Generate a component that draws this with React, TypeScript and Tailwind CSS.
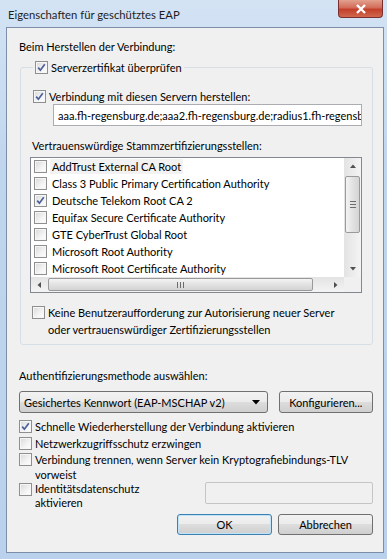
import React from "react";

const Check = ({ checked = false }: { checked?: boolean }) => (
  <span className="w-[13px] h-[13px] shrink-0 border border-[#8e8f8f] bg-[linear-gradient(135deg,#d8d8d8,#f4f4f4_60%,#ffffff)] shadow-[inset_0_0_0_1px_#f6f6f6] flex items-center justify-center">
    {checked && (
      <svg width="9" height="9" viewBox="0 0 9 9">
        <path d="M1.2 4.6 L3.4 7.2 L7.8 1.2" stroke="#4b5f9c" strokeWidth="1.7" fill="none" />
      </svg>
    )}
  </span>
);

const certs = [
  { name: "AddTrust External CA Root", checked: false, focus: true },
  { name: "Class 3 Public Primary Certification Authority", checked: false },
  { name: "Deutsche Telekom Root CA 2", checked: true },
  { name: "Equifax Secure Certificate Authority", checked: false },
  { name: "GTE CyberTrust Global Root", checked: false },
  { name: "Microsoft Root Authority", checked: false },
  { name: "Microsoft Root Certificate Authority", checked: false },
];

const Arrow = ({ dir }: { dir: "up" | "down" | "left" | "right" }) => {
  const d = {
    up: "M1 5 L4 1.5 L7 5 Z",
    down: "M1 2 L4 5.5 L7 2 Z",
    left: "M5 1 L1.5 4 L5 7 Z",
    right: "M2 1 L5.5 4 L2 7 Z",
  }[dir];
  return (
    <svg width="8" height="8" viewBox="0 0 8 8">
      <path d={d} fill="#505050" />
    </svg>
  );
};

const btn =
  "h-[21px] border rounded-[3px] bg-[linear-gradient(180deg,#f2f2f2,#ebebeb_50%,#dddddd_50%,#cfcfcf)] flex items-center";

const App = () => {
  return (
    <div className="w-[387px] h-[559px] bg-[linear-gradient(180deg,#d3e3f4,#c0d6ee_30%,#b9d1ec)] flex flex-col font-['Lato',sans-serif] text-[11px] leading-[15px] text-black overflow-hidden">
      {/* title bar */}
      <div className="h-[27px] flex items-start justify-between">
        <div className="pl-[8px] pt-[7px] text-[11.3px] text-[#1e1e1e]">Eigenschaften für geschütztes EAP</div>
        <div className="mr-[4px] w-[45px] h-[18px] rounded-b-[4px] border border-[#7b2f2f] border-t-0 bg-[linear-gradient(180deg,#e2a18e,#d36c5a_45%,#c33f2a_55%,#d0684e)] flex items-center justify-center">
          <svg width="12" height="10" viewBox="0 0 12 10">
            <path d="M2 1 L10 9 M10 1 L2 9" stroke="#ffffff" strokeWidth="2.4" />
          </svg>
        </div>
      </div>

      {/* client */}
      <div className="ml-[6px] mr-[3px] mb-[6px] flex-1 min-w-0 border border-[#7d8fa6] bg-[#f0f0f0] pl-[12px] pr-[10px] pt-[11px] flex flex-col">
        <div>Beim Herstellen der Verbindung:</div>

        <fieldset className="mt-[6px] ml-[1px] min-w-0 border border-[#d5dfe5] rounded-[3px] pl-[10px] pr-[10px] pb-[6px]">
          <legend className="ml-[2px] px-[2px] flex items-center gap-[3px]">
            <Check checked />
            <span>Serverzertifikat überprüfen</span>
          </legend>

          <div className="mt-[14px] flex items-center gap-[3px] pl-[2px]">
            <Check checked />
            <span>Verbindung mit diesen Servern herstellen:</span>
          </div>
          <div className="ml-[22px] h-[22px] border border-[#abadb3] bg-white px-[4px] flex items-center whitespace-nowrap overflow-hidden">
            aaa.fh-regensburg.de;aaa2.fh-regensburg.de;radius1.fh-regensburg.de
          </div>

          <div className="mt-[12px] pl-[1px]">Vertrauenswürdige Stammzertifizierungsstellen:</div>
          <div className="mt-[4px] -ml-[1px] h-[136px] border border-[#828790] bg-white flex flex-col overflow-hidden">
            <div className="flex flex-1 min-h-0">
              <div className="flex-1 min-w-0 overflow-hidden">
                {certs.map((c) => (
                  <div key={c.name} className="h-[17px] flex items-center pl-[3px] whitespace-nowrap">
                    <Check checked={c.checked} />
                    <span className={"ml-[3px] px-[2px] " + (c.focus ? "bg-[#f2f2f2]" : "")}>{c.name}</span>
                  </div>
                ))}
              </div>
              {/* vertical scrollbar */}
              <div className="w-[17px] shrink-0 bg-[linear-gradient(90deg,#e3e3e3,#f4f4f4)] flex flex-col items-center">
                <div className="h-[17px] flex items-center justify-center"><Arrow dir="up" /></div>
                <div className="mt-[1px] w-[15px] h-[57px] rounded-[2px] border border-[#9a9a9a] bg-[linear-gradient(90deg,#f4f4f4,#e2e2e2_50%,#d4d4d4)] flex flex-col items-center justify-center gap-[2px]">
                  <span className="w-[6px] h-[1px] bg-[#6c6c6c]" />
                  <span className="w-[6px] h-[1px] bg-[#6c6c6c]" />
                  <span className="w-[6px] h-[1px] bg-[#6c6c6c]" />
                </div>
                <div className="flex-1" />
                <div className="h-[17px] flex items-center justify-center"><Arrow dir="down" /></div>
              </div>
            </div>
            {/* horizontal scrollbar */}
            <div className="h-[15px] shrink-0 flex bg-[linear-gradient(180deg,#e3e3e3,#f4f4f4)]">
              <div className="w-[17px] flex items-center justify-center"><Arrow dir="left" /></div>
              <div className="flex-1 flex items-center pr-[14px]">
                <div className="w-full h-[13px] rounded-[2px] border border-[#9a9a9a] bg-[linear-gradient(180deg,#f4f4f4,#e2e2e2_50%,#d4d4d4)] flex items-center justify-center gap-[2px]">
                  <span className="w-[1px] h-[6px] bg-[#6c6c6c]" />
                  <span className="w-[1px] h-[6px] bg-[#6c6c6c]" />
                  <span className="w-[1px] h-[6px] bg-[#6c6c6c]" />
                </div>
              </div>
              <div className="w-[17px] flex items-center justify-center"><Arrow dir="right" /></div>
              <div className="w-[17px] bg-[#f0f0f0]" />
            </div>
          </div>

          <div className="mt-[11px] flex items-start gap-[3px] pl-[1px]">
            <span className="mt-[2px]"><Check /></span>
            <span className="leading-[17px]">
              Keine Benutzeraufforderung zur Autorisierung neuer Server
              <br />
              oder vertrauenswürdiger Zertifizierungsstellen
            </span>
          </div>
        </fieldset>

        <div className="mt-[23px]">Authentifizierungsmethode auswählen:</div>
        <div className="mt-[8px] flex items-center gap-[11px]">
          <div className={btn + " w-[250px] h-[22px] border-[#707070] justify-between pl-[4px] pr-[7px]"}>
            <span>Gesichertes Kennwort (EAP-MSCHAP v2)</span>
            <svg width="8" height="5" viewBox="0 0 8 5"><path d="M0 0 L8 0 L4 4.5 Z" fill="#000" /></svg>
          </div>
          <div className={btn + " w-[95px] h-[22px] border-[#707070] justify-center"}>Konfigurieren...</div>
        </div>

        <div className="mt-[5px] flex flex-col">
          <div className="h-[17px] flex items-center gap-[3px]"><Check checked /><span>Schnelle Wiederherstellung der Verbindung aktivieren</span></div>
          <div className="h-[17px] flex items-center gap-[3px]"><Check /><span>Netzwerkzugriffsschutz erzwingen</span></div>
          <div className="flex items-start gap-[3px]">
            <span className="mt-[1px]"><Check /></span>
            <span className="leading-[15px]">Verbindung trennen, wenn Server kein Kryptografiebindungs-TLV<br />vorweist</span>
          </div>
          <div className="flex items-start">
            <div className="flex items-start gap-[3px]">
              <span className="mt-[1px]"><Check /></span>
              <span className="leading-[14px]">Identitätsdatenschutz<br />aktivieren</span>
            </div>
            <div className="ml-auto w-[168px] h-[22px] border border-[#c5c5c5] rounded-[2px] bg-[#f0f0f0]" />
          </div>
        </div>

        <div className="mt-[4px] flex justify-end gap-[6px]">
          <div className={btn + " w-[95px] border-[#3c7fb1] shadow-[inset_0_0_0_1px_#bfe4f9] justify-center"}>OK</div>
          <div className={btn + " w-[95px] border-[#707070] justify-center"}>Abbrechen</div>
        </div>
      </div>
    </div>
  );
};

export default App;
